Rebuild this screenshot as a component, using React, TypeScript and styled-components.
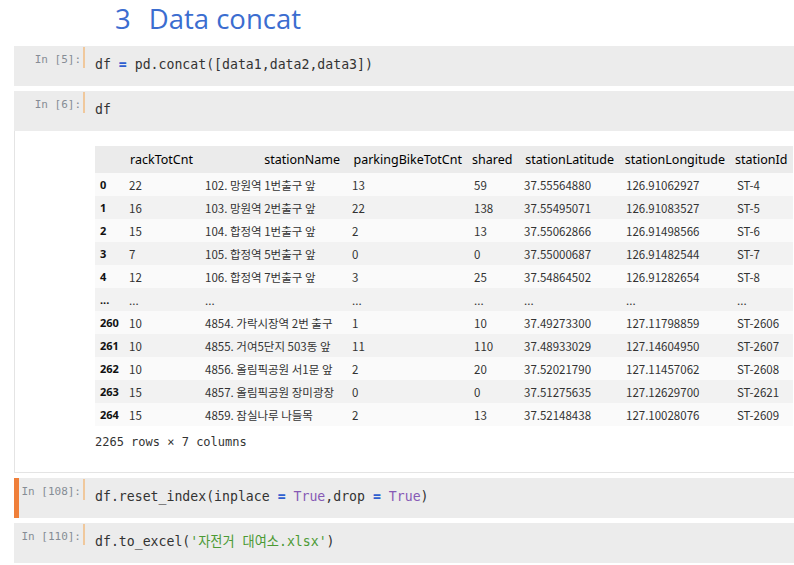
import React from "react";
import styled, { createGlobalStyle } from "styled-components";

const MONO = `"DejaVu Sans Mono", "Noto Sans CJK KR", monospace`;
const SANS = `"Noto Sans", "Noto Sans CJK KR", sans-serif`;
const VALUE = `"Noto Sans CJK KR", "Noto Sans", sans-serif`;

const GlobalStyle = createGlobalStyle`
  html, body { margin: 0; padding: 0; background: #ffffff; overflow: hidden; }
  body { width: 794px; height: 565px; }
`;

const Notebook = styled.div`
  display: flex;
  flex-direction: column;
  gap: 5px;
  padding-left: 14px;
  width: 820px;
`;

const Heading = styled.h1`
  display: flex;
  align-items: baseline;
  gap: 18px;
  margin: -1px 0 0 0;
  height: 42px;
  padding: 1px 0 0 101px;
  box-sizing: border-box;
  font-family: "Open Sans", sans-serif;
  font-weight: 400;
  font-size: 27.5px;
  line-height: 38px;
  color: #3b6dd0;
  white-space: nowrap;
`;

const Cell = styled.div`
  display: flex;
  flex-direction: column;
`;

const InputRow = styled.div<{ $selected?: boolean }>`
  display: flex;
  align-items: flex-start;
  height: 40px;
  box-sizing: border-box;
  background: #ececec;
  border-left: 5px solid ${(p) => (p.$selected ? "#ef7f3a" : "transparent")};
`;

const Prompt = styled.div`
  flex-shrink: 0;
  width: 62px;
  padding-top: 7px;
  text-align: right;
  font-family: ${MONO};
  font-size: 11px;
  line-height: 14px;
  color: #868c95;
  white-space: pre;
`;

const Marker = styled.div`
  flex-shrink: 0;
  width: 2px;
  height: 21px;
  margin: 1px 0 0 2px;
  background: #f0c89c;
`;

const Code = styled.div`
  margin-left: 10px;
  padding-top: 10px;
  font-family: ${MONO};
  font-size: 13.2px;
  line-height: 17px;
  color: #333333;
  white-space: pre;
`;

const Op = styled.span`
  color: #2f5fd0;
  font-weight: bold;
`;

const Kw = styled.span`
  color: #8659b5;
`;

const Str = styled.span`
  color: #4b9a34;
`;

const Output = styled.div`
  background: #ffffff;
  border-left: 1px solid #e4e4e4;
  border-bottom: 1px solid #e4e4e4;
  padding: 15px 0 23px 80px;
`;

const Table = styled.table`
  border-collapse: collapse;
  table-layout: fixed;
  width: 698px;
  border-spacing: 0;
`;

const HeadCell = styled.th`
  height: 27px;
  padding: 0 7px 0 3px;
  background: #ebebeb;
  font-family: ${SANS};
  font-size: 12.5px;
  font-weight: 400;
  color: #000000;
  text-align: right;
  white-space: nowrap;
  vertical-align: middle;
`;

const Row = styled.tr<{ $odd: boolean }>`
  background: ${(p) => (p.$odd ? "#f2f2f2" : "#fafafa")};
`;

const IndexCell = styled.th`
  height: 23px;
  padding: 0 5px;
  font-family: ${SANS};
  font-size: 11px;
  font-weight: 700;
  color: #111111;
  text-align: left;
  white-space: nowrap;
  vertical-align: middle;
`;

const DataCell = styled.td`
  height: 23px;
  padding: 0 5px;
  font-family: ${VALUE};
  font-size: 11.5px;
  color: #333333;
  text-align: left;
  white-space: nowrap;
  overflow: hidden;
  vertical-align: middle;
`;

const Footer = styled.div`
  margin-top: 9px;
  font-family: ${MONO};
  font-size: 12px;
  line-height: 14px;
  color: #333333;
`;

const colWidths = [29, 76, 147, 122, 50, 102, 111, 61];
const headers = [
  "",
  "rackTotCnt",
  "stationName",
  "parkingBikeTotCnt",
  "shared",
  "stationLatitude",
  "stationLongitude",
  "stationId",
];

const rows: string[][] = [
  ["0", "22", "102. 망원역 1번출구 앞", "13", "59", "37.55564880", "126.91062927", "ST-4"],
  ["1", "16", "103. 망원역 2번출구 앞", "22", "138", "37.55495071", "126.91083527", "ST-5"],
  ["2", "15", "104. 합정역 1번출구 앞", "2", "13", "37.55062866", "126.91498566", "ST-6"],
  ["3", "7", "105. 합정역 5번출구 앞", "0", "0", "37.55000687", "126.91482544", "ST-7"],
  ["4", "12", "106. 합정역 7번출구 앞", "3", "25", "37.54864502", "126.91282654", "ST-8"],
  ["...", "...", "...", "...", "...", "...", "...", "..."],
  ["260", "10", "4854. 가락시장역 2번 출구", "1", "10", "37.49273300", "127.11798859", "ST-2606"],
  ["261", "10", "4855. 거여5단지 503동 앞", "11", "110", "37.48933029", "127.14604950", "ST-2607"],
  ["262", "10", "4856. 올림픽공원 서1문 앞", "2", "20", "37.52021790", "127.11457062", "ST-2608"],
  ["263", "15", "4857. 올림픽공원 장미광장", "0", "0", "37.51275635", "127.12629700", "ST-2621"],
  ["264", "15", "4859. 잠실나루 나들목", "2", "13", "37.52148438", "127.10028076", "ST-2609"],
];

export default function App() {
  return (
    <>
      <GlobalStyle />
      <Notebook>
        <Heading>
          <span>3</span>
          <span>Data concat</span>
        </Heading>

        <Cell>
          <InputRow>
            <Prompt>In [5]:</Prompt>
            <Marker />
            <Code>
              df <Op>=</Op> pd.concat([data1,data2,data3])
            </Code>
          </InputRow>
        </Cell>

        <Cell>
          <InputRow>
            <Prompt>In [6]:</Prompt>
            <Marker />
            <Code>df</Code>
          </InputRow>
          <Output>
            <Table>
              <colgroup>
                {colWidths.map((w, i) => (
                  <col key={i} style={{ width: w }} />
                ))}
              </colgroup>
              <thead>
                <tr>
                  {headers.map((h, i) => (
                    <HeadCell key={i}>{h}</HeadCell>
                  ))}
                </tr>
              </thead>
              <tbody>
                {rows.map((r, ri) => (
                  <Row key={ri} $odd={ri % 2 === 1}>
                    <IndexCell>{r[0]}</IndexCell>
                    {r.slice(1).map((v, ci) => (
                      <DataCell key={ci}>{v}</DataCell>
                    ))}
                  </Row>
                ))}
              </tbody>
            </Table>
            <Footer>2265 rows × 7 columns</Footer>
          </Output>
        </Cell>

        <Cell>
          <InputRow $selected>
            <Prompt>In [108]:</Prompt>
            <Marker />
            <Code>
              df.reset_index(inplace <Op>=</Op> <Kw>True</Kw>,drop <Op>=</Op> <Kw>True</Kw>)
            </Code>
          </InputRow>
        </Cell>

        <Cell>
          <InputRow>
            <Prompt>In [110]:</Prompt>
            <Marker />
            <Code>
              df.to_excel(<Str>'자전거 대여소.xlsx'</Str>)
            </Code>
          </InputRow>
        </Cell>
      </Notebook>
    </>
  );
}
